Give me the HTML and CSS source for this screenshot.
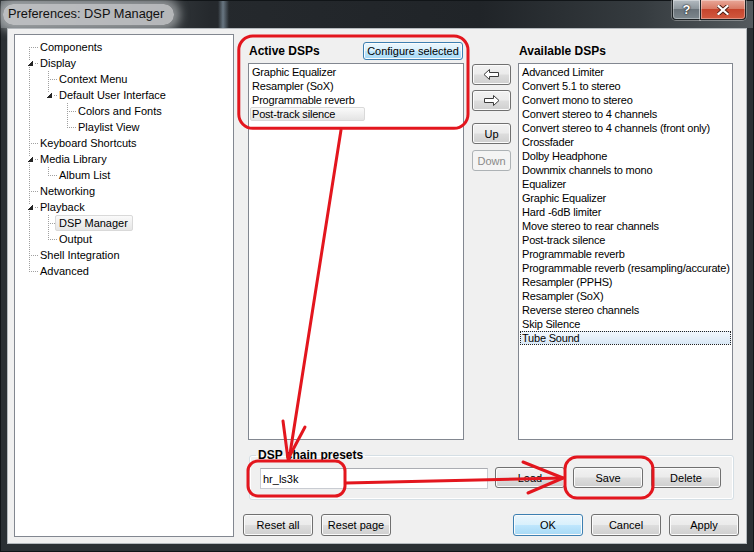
FILE: index.html
```html
<!DOCTYPE html>
<html lang="en">
<head>
  <meta charset="UTF-8">
  <title>Preferences: DSP Manager</title>
  <link rel="stylesheet" href="styles.css">
</head>
<body>
  <div class="window">
    <div class="titlebar">
      <span class="caption">Preferences: DSP Manager</span>
      <div class="caption-buttons">
        <span class="cap-btn help">?</span>
        <span class="cap-btn close">
          <svg width="12" height="10" viewBox="0 0 12 10">
            <path d="M1.5 1 L10.5 9 M10.5 1 L1.5 9" stroke="#4a1a10" stroke-width="4" stroke-linecap="square"/>
            <path d="M1.5 1 L10.5 9 M10.5 1 L1.5 9" stroke="#fff" stroke-width="2.2" stroke-linecap="square"/>
          </svg>
        </span>
      </div>
    </div>

    <div class="client">
      <div class="tree">
        <div class="row"><span class="g first"></span><span class="t">Components</span></div>
        <div class="row"><span class="g tee exp"></span><span class="t">Display</span></div>
        <div class="row"><span class="g pipe"></span><span class="g tee"></span><span class="t">Context Menu</span></div>
        <div class="row"><span class="g pipe"></span><span class="g elbow exp"></span><span class="t">Default User Interface</span></div>
        <div class="row"><span class="g pipe"></span><span class="g"></span><span class="g tee"></span><span class="t">Colors and Fonts</span></div>
        <div class="row"><span class="g pipe"></span><span class="g"></span><span class="g elbow"></span><span class="t">Playlist View</span></div>
        <div class="row"><span class="g tee"></span><span class="t">Keyboard Shortcuts</span></div>
        <div class="row"><span class="g tee exp"></span><span class="t">Media Library</span></div>
        <div class="row"><span class="g pipe"></span><span class="g elbow"></span><span class="t">Album List</span></div>
        <div class="row"><span class="g tee"></span><span class="t">Networking</span></div>
        <div class="row"><span class="g tee exp"></span><span class="t">Playback</span></div>
        <div class="row"><span class="g pipe"></span><span class="g tee"></span><span class="t sel">DSP Manager</span></div>
        <div class="row"><span class="g pipe"></span><span class="g elbow"></span><span class="t">Output</span></div>
        <div class="row"><span class="g tee"></span><span class="t">Shell Integration</span></div>
        <div class="row"><span class="g elbow"></span><span class="t">Advanced</span></div>
      </div>

      <div class="page">
        <div class="dsp-area">
          <div class="dsp-col active">
            <div class="col-head">
              <span class="head">Active DSPs</span>
              <button class="btn hot configure">Configure selected</button>
            </div>
            <ul class="list">
              <li>Graphic Equalizer</li>
              <li>Resampler (SoX)</li>
              <li>Programmable reverb</li>
              <li class="sel">Post-track silence</li>
            </ul>
          </div>

          <div class="move-btns">
            <button class="btn move">
              <svg width="17" height="11" viewBox="0 0 17 11"><path d="M1 5.5 L6.5 0.5 V3.5 H15.5 V7.5 H6.5 V10.5 Z" fill="#fff" stroke="#3c3c3c"/></svg>
            </button>
            <button class="btn move">
              <svg width="17" height="11" viewBox="0 0 17 11"><path d="M16 5.5 L10.5 0.5 V3.5 H1.5 V7.5 H10.5 V10.5 Z" fill="#fff" stroke="#3c3c3c"/></svg>
            </button>
            <button class="btn move up">Up</button>
            <button class="btn move" disabled>Down</button>
          </div>

          <div class="dsp-col avail">
            <div class="col-head">
              <span class="head">Available DSPs</span>
            </div>
            <ul class="list">
              <li>Advanced Limiter</li>
              <li>Convert 5.1 to stereo</li>
              <li>Convert mono to stereo</li>
              <li>Convert stereo to 4 channels</li>
              <li>Convert stereo to 4 channels (front only)</li>
              <li>Crossfader</li>
              <li>Dolby Headphone</li>
              <li>Downmix channels to mono</li>
              <li>Equalizer</li>
              <li>Graphic Equalizer</li>
              <li>Hard -6dB limiter</li>
              <li>Move stereo to rear channels</li>
              <li>Post-track silence</li>
              <li>Programmable reverb</li>
              <li>Programmable reverb (resampling/accurate)</li>
              <li>Resampler (PPHS)</li>
              <li>Resampler (SoX)</li>
              <li>Reverse stereo channels</li>
              <li>Skip Silence</li>
              <li class="focus">Tube Sound</li>
            </ul>
          </div>
        </div>

        <fieldset class="presets">
          <legend>DSP chain presets</legend>
          <div class="preset-row">
            <input class="preset-name" type="text" value="hr_ls3k">
            <button class="btn small load">Load</button>
            <button class="btn small">Save</button>
            <button class="btn small">Delete</button>
          </div>
        </fieldset>

        <div class="dialog-btns">
          <button class="btn">Reset all</button>
          <button class="btn">Reset page</button>
          <span class="spacer"></span>
          <button class="btn hot">OK</button>
          <button class="btn">Cancel</button>
          <button class="btn">Apply</button>
        </div>
      </div>
    </div>

    <!-- red markup drawn on top of the screenshot -->
    <svg class="marks" width="754" height="552" viewBox="0 0 754 552">
      <g fill="none" stroke="#e3161e" stroke-width="3" stroke-linecap="round" stroke-linejoin="round">
        <rect x="238.8" y="36" width="229.2" height="92.3" rx="14"/>
        <path d="M341 130 L289 460"/>
        <path d="M283 421 L288 459 L305 427"/>
        <rect x="248" y="461" width="97" height="35" rx="10"/>
        <path d="M346 483 L563 478"/>
        <path d="M523 462 L563 478 L528 493"/>
        <rect x="565" y="457" width="88" height="41" rx="12"/>
      </g>
    </svg>
  </div>
</body>
</html>
```

FILE: styles.css
```css
* {
  margin: 0;
  padding: 0;
  box-sizing: border-box;
}

body {
  width: 754px;
  height: 552px;
  overflow: hidden;
  font-family: "Liberation Sans", Arial, sans-serif;
  font-size: 11px;
  color: #000;
  background: #262b2f;
}

.window {
  position: relative;
  width: 754px;
  height: 552px;
  padding: 0 7px 8px;
  display: flex;
  flex-direction: column;
  background:
    linear-gradient(to right, transparent 218px, rgba(160, 182, 200, 0.55) 223px, transparent 229px) 0 0 / 100% 28px no-repeat,
    linear-gradient(to right, #5a6064 0, #3c4246 130px, #25292d 210px, #202428 480px, #353b3f 640px, #545a5e 754px) 0 0 / 100% 28px no-repeat,
    #2b3034;
  box-shadow: inset 0 0 0 1px #111518;
}

/* title bar */
.titlebar {
  height: 28px;
  display: flex;
  align-items: flex-start;
}

.caption {
  margin: 4px 0 0 -4px;
  padding: 2px 10px 3px 5px;
  font-size: 12.8px;
  line-height: 16px;
  color: #111;
  background: rgba(204, 206, 208, 0.85);
  border-radius: 10px;
  box-shadow: 0 0 10px 6px rgba(204, 206, 208, 0.6);
}

.caption-buttons {
  margin-left: auto;
  margin-right: 1px;
  display: flex;
}

.cap-btn {
  height: 20px;
  display: flex;
  align-items: center;
  justify-content: center;
  border: 1px solid #1c2124;
  border-top: none;
  box-shadow: 0 0 0 1px rgba(255, 255, 255, 0.3), inset 0 0 0 1px rgba(255, 255, 255, 0.35);
}

.cap-btn.help {
  width: 28px;
  border-radius: 0 0 0 4px;
  border-right: none;
  background: linear-gradient(#b3bbc1 0%, #8e979d 45%, #6a737a 50%, #7d878d 100%);
  color: #fff;
  font-weight: bold;
  font-size: 13px;
  text-shadow: 0 0 2px #222, 0 0 1px #000;
}

.cap-btn.close {
  width: 46px;
  border-radius: 0 0 4px 0;
  background: linear-gradient(#e9a899 0%, #d97b66 45%, #c6452d 50%, #d2593f 100%);
}

/* client area */
.client {
  flex: 1;
  display: flex;
  background: #f0f0f0;
  border: 1px solid #b4b9bd;
  padding: 5px 7px 6px 6px;
}

.tree {
  flex: none;
  width: 220px;
  background: #fff;
  border: 1px solid #828790;
  padding: 4px 0 0 5px;
}

.row {
  display: flex;
  height: 16px;
}

.g {
  width: 19px;
  height: 16px;
  flex: none;
  background-repeat: no-repeat;
}

.g.pipe {
  background-image: repeating-linear-gradient(to bottom, #a0a0a0 0 1px, transparent 1px 2px);
  background-position: 9px 0;
  background-size: 1px 16px;
}

.g.tee {
  background-image:
    repeating-linear-gradient(to right, #a0a0a0 0 1px, transparent 1px 2px),
    repeating-linear-gradient(to bottom, #a0a0a0 0 1px, transparent 1px 2px);
  background-position: 11px 8px, 9px 0;
  background-size: 8px 1px, 1px 16px;
}

.g.elbow {
  background-image:
    repeating-linear-gradient(to right, #a0a0a0 0 1px, transparent 1px 2px),
    repeating-linear-gradient(to bottom, #a0a0a0 0 1px, transparent 1px 2px);
  background-position: 11px 8px, 9px 0;
  background-size: 8px 1px, 1px 9px;
}

.g.first {
  background-image:
    repeating-linear-gradient(to right, #a0a0a0 0 1px, transparent 1px 2px),
    repeating-linear-gradient(to bottom, #a0a0a0 0 1px, transparent 1px 2px);
  background-position: 11px 8px, 9px 8px;
  background-size: 8px 1px, 1px 8px;
}

.g.tee.exp,
.g.elbow.exp {
  background-image:
    linear-gradient(to bottom right, transparent 50%, #262626 50%),
    linear-gradient(#fff, #fff),
    repeating-linear-gradient(to right, #a0a0a0 0 1px, transparent 1px 2px),
    repeating-linear-gradient(to bottom, #a0a0a0 0 1px, transparent 1px 2px);
  background-position: 7px 6px, 7px 6px, 15px 8px, 9px 0;
  background-size: 6px 5px, 6px 5px, 4px 1px, 1px 16px;
}

.g.elbow.exp {
  background-size: 6px 5px, 6px 5px, 4px 1px, 1px 8px;
}

.t {
  line-height: 16px;
  white-space: nowrap;
  padding-left: 1px;
}

.t.sel {
  margin-left: -3px;
  padding: 0 4px 0 3px;
  line-height: 14px;
  border: 1px solid #d9d9d9;
  border-radius: 2px;
  background: linear-gradient(#fafafa, #e6e6e6);
}

/* right page */
.page {
  flex: 1;
  min-width: 0;
  margin-left: 9px;
  display: flex;
  flex-direction: column;
}

.dsp-area {
  display: flex;
  margin: 0 6px 0 5px;
}

.dsp-col.active {
  flex: none;
  width: 216px;
}

.dsp-col.avail {
  flex: 1;
  min-width: 0;
  margin-left: 7px;
}

.col-head {
  height: 29px;
  padding-top: 8px;
  display: flex;
  align-items: flex-start;
}

.head {
  font-size: 12px;
  font-weight: bold;
  line-height: 18px;
  padding-left: 1px;
}

.list {
  list-style: none;
  height: 377px;
  overflow: hidden;
  background: #fff;
  border: 1px solid #828790;
  padding: 1px;
  letter-spacing: -0.2px;
}

.list li {
  height: 14px;
  line-height: 14px;
  padding-left: 2px;
  white-space: nowrap;
}

.list li.sel {
  width: 115px;
  padding-left: 1px;
  line-height: 12px;
  border: 1px solid #d9d9d9;
  border-radius: 2px;
  background: linear-gradient(#fafafa, #e4e4e4);
}

.list li.focus {
  padding-left: 1px;
  line-height: 12px;
  border: 1px dotted #222;
  background: linear-gradient(#f1f7fd, #d9e8f6);
}

/* buttons */
.btn {
  font: 11px "Liberation Sans", Arial, sans-serif;
  color: #000;
  flex: none;
  width: 70px;
  height: 22px;
  border: 1px solid #707070;
  border-radius: 3px;
  background: linear-gradient(#f2f2f2 0%, #ebebeb 48%, #dddddd 52%, #cfcfcf 100%);
  box-shadow: inset 0 0 0 1px #fbfbfb;
}

.btn.hot {
  border-color: #3c7fb1;
  background: linear-gradient(#eaf6fd 0%, #d9f0fc 48%, #bee6fd 52%, #a7d9f5 100%);
}

.btn:disabled {
  color: #8a8a8a;
  border-color: #adb2b5;
  background: #f4f4f4;
  box-shadow: none;
}

.configure {
  margin-left: auto;
  margin-right: 1px;
  width: 100px;
  height: 18px;
  line-height: 14px;
}

.move-btns {
  flex: none;
  width: 39px;
  margin-left: 8px;
  padding-top: 30px;
  display: flex;
  flex-direction: column;
}

.btn.move {
  width: 39px;
  height: 21px;
  display: flex;
  align-items: center;
  justify-content: center;
  margin-bottom: 5px;
}

.btn.move.up {
  margin-top: 7px;
  margin-bottom: 6px;
}

/* presets group */
.presets {
  margin: 8px 6px 0;
  border: 1px solid #d5dfe5;
  border-radius: 3px;
  padding: 5px 12px 10px 10px;
  box-shadow: inset 0 0 0 1px #fff;
}

.presets legend {
  margin-left: -4px;
  padding: 0 2px;
  font-size: 12px;
  font-weight: bold;
  line-height: 14px;
}

.preset-row {
  display: flex;
  align-items: flex-start;
}

.preset-name {
  flex: none;
  width: 228px;
  height: 21px;
  margin-top: 1px;
  padding-left: 2px;
  font: 11px "Liberation Sans", Arial, sans-serif;
  color: #000;
  background: #fff;
  border: 1px solid #c9ccd2;
  border-top-color: #abadb3;
  outline: none;
}

.btn.small {
  height: 21px;
  margin-left: 8px;
}

.btn.small.load {
  margin-left: 7px;
}

.dialog-btns {
  margin-top: 14px;
  display: flex;
  gap: 8px;
}

.spacer {
  flex: 1;
}

.marks {
  position: absolute;
  left: 0;
  top: 0;
  pointer-events: none;
}
```
